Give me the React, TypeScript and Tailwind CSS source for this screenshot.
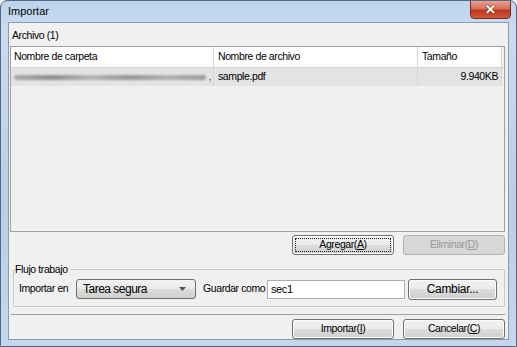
import React from "react";

const font = { fontFamily: '"Liberation Sans", Arial, sans-serif' };

function WinButton({
  children,
  disabled,
  focused,
  className = "",
}: {
  children: React.ReactNode;
  disabled?: boolean;
  focused?: boolean;
  className?: string;
}) {
  if (disabled) {
    return (
      <div
        className={`flex shrink-0 items-center justify-center whitespace-nowrap rounded-[3px] border border-[#adb2b5] bg-[#d7d7d7] text-[#9a9a9a] ${className}`}
      >
        {children}
      </div>
    );
  }
  return (
    <div
      className={`relative flex shrink-0 items-center justify-center whitespace-nowrap rounded-[3px] border border-[#707070] bg-[linear-gradient(#f2f2f2_0%,#ebebeb_50%,#dddddd_50%,#cfcfcf_100%)] text-black shadow-[inset_0_0_0_1px_#fcfcfc] ${className}`}
    >
      {focused && (
        <div className="absolute inset-[2px] border border-dotted border-[#202020]" />
      )}
      <span className="relative">{children}</span>
    </div>
  );
}

export default function App() {
  return (
    <div
      className="relative h-[347px] w-[517px] overflow-hidden rounded-t-[7px] border border-[#56687f] bg-[linear-gradient(180deg,#bcd4ec_0%,#c9dcf0_8%,#b7cfe8_60%,#c3d8ee_100%)] text-[10.5px] tracking-[-0.4px]"
      style={font}
    >
      {/* Title bar */}
      <div className="flex h-[21px] items-center pl-[7px] text-[11px] tracking-normal text-black">
        Importar
      </div>
      {/* Close button */}
      <div className="absolute right-[5px] top-[-1px] flex h-[19px] w-[41px] items-center justify-center rounded-b-[4px] border border-[#7a2a23] bg-[linear-gradient(#e8a190_0%,#d6715b_45%,#c0371f_55%,#d25a3e_100%)]">
        <span className="text-[13px] font-bold leading-none text-white [text-shadow:0_0_2px_#3a1a14]">
          ✕
        </span>
      </div>

      {/* Client area */}
      <div className="mx-[7px] flex h-[318px] flex-col border border-[#8d9aaa] bg-[#f0f0f0] pl-[1px] pr-[3px]">
        <div className="pl-[2px] pt-[5px] leading-[15px]">Archivo (1)</div>
        {/* Table */}
        <div className="mt-[3px] flex h-[186px] flex-col border border-[#a0a0a0] bg-[#f0f0f0]">
          <div className="flex h-[21px] border-b border-[#d5d5d5]">
            <div className="flex w-[203px] items-center border-r border-[#d5d5d5] bg-white pl-[3px]">
              Nombre de carpeta
            </div>
            <div className="flex w-[204px] items-center border-r border-[#d5d5d5] bg-white pl-[4px]">
              Nombre de archivo
            </div>
            <div className="flex w-[84px] items-center border-r border-[#d5d5d5] bg-white pl-[4px]">
              Tamaño
            </div>
            <div className="flex-1" />
          </div>
          <div className="flex h-[18px]">
            <div className="flex w-[203px] items-center gap-[2px] border-r border-[#d5d5d5] bg-[#e3e3e3] pl-[3px] pr-[2px]">
              <div className="h-[5px] flex-1 rounded-full bg-[linear-gradient(90deg,#aaaaaa,#8e8e8e_20%,#b4b4b4_40%,#969696_60%,#b0b0b0_80%,#9a9a9a)] blur-[1px]" />
              <span className="text-[#555]">,</span>
            </div>
            <div className="flex w-[204px] items-center border-r border-[#d5d5d5] bg-[#e3e3e3] pl-[4px]">
              sample.pdf
            </div>
            <div className="flex w-[84px] items-center justify-end border-r border-[#d5d5d5] bg-[#e3e3e3] pr-[3px]">
              9.940KB
            </div>
            <div className="flex-1" />
          </div>
        </div>
        {/* Agregar / Eliminar */}
        <div className="mt-[3px] flex justify-end gap-[9px]">
          <WinButton focused className="h-[20px] w-[102px]">
            Agregar(<span className="underline">A</span>)
          </WinButton>
          <WinButton disabled className="h-[20px] w-[102px]">
            Eliminar(<span className="underline">D</span>)
          </WinButton>
        </div>

        {/* Group box */}
        <div className="relative ml-[3px] mt-[14px] h-[38px] rounded-[2px] border border-[#c9c9c9]">
          <div className="absolute left-[1px] top-[-8px] bg-[#f0f0f0] pr-[3px] leading-[14px]">
            Flujo trabajo
          </div>
          <div className="flex h-full items-center whitespace-nowrap pl-[5px] pt-[2px]">
            <span className="w-[57px] shrink-0">Importar en</span>
            <div className="flex h-[20px] w-[120px] shrink-0 items-center justify-between rounded-[3px] border border-[#707070] bg-[linear-gradient(#f2f2f2_0%,#ebebeb_50%,#dddddd_50%,#cfcfcf_100%)] pl-[6px] pr-[9px] text-[12px] tracking-[-0.5px]">
              <span>Tarea segura</span>
              <svg width="7" height="4" viewBox="0 0 7 4">
                <path d="M0 0 H7 L3.5 4 Z" fill="#555" />
              </svg>
            </div>
            <span className="w-[71px] shrink-0 pl-[7px]">Guardar como</span>
            <div className="flex h-[19px] w-[138px] shrink-0 items-center border border-[#abadb3] bg-white pl-[3px] text-[11px]">
              sec1
            </div>
            <WinButton className="ml-[3px] h-[21px] w-[89px]">
              <span className="text-[12px] tracking-[-0.3px]">Cambiar...</span>
            </WinButton>
          </div>
        </div>

        {/* Separator */}
        <div className="ml-[1px] mt-[7px] border-t border-[#a0a0a0]" />

        {/* Bottom buttons */}
        <div className="mt-[4px] flex justify-end gap-[9px]">
          <WinButton className="h-[20px] w-[102px]">
            Importar(<span className="underline">I</span>)
          </WinButton>
          <WinButton className="h-[20px] w-[102px]">
            Cancelar(<span className="underline">C</span>)
          </WinButton>
        </div>
      </div>
    </div>
  );
}
